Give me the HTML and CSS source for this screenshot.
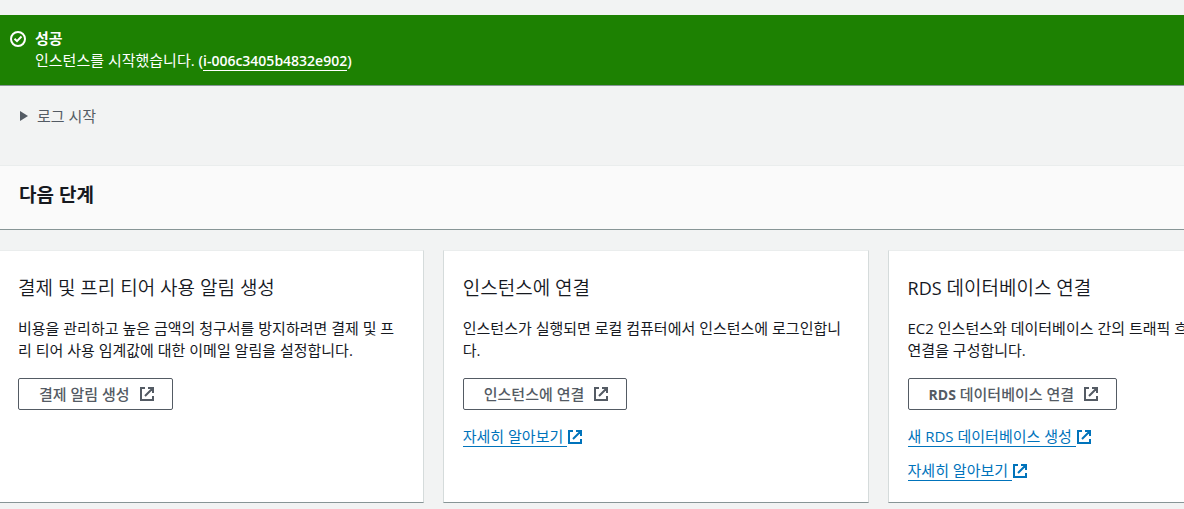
FILE: index.html
```html
<!DOCTYPE html>
<html lang="ko">
<head>
<meta charset="utf-8">
<meta name="viewport" content="width=device-width, initial-scale=1">
<title>인스턴스 시작</title>
<link rel="stylesheet" href="styles.css">
</head>
<body>
<svg class="symbols" aria-hidden="true">
  <symbol id="external" viewBox="0 0 14 14">
    <path d="M5 1H1v12h12V9M8 1h5v5M12.500 1.500L5 9" fill="none" stroke="currentColor" stroke-width="2"/>
  </symbol>
</svg>
<main class="page">
  <section class="flash" role="status">
    <svg class="flash-icon" viewBox="0 0 16 16" aria-hidden="true">
      <circle cx="8" cy="8" r="7" fill="none" stroke="currentColor" stroke-width="2"/>
      <path d="M4.500 7.800l2.500 2.400L11.500 5.500" fill="none" stroke="currentColor" stroke-width="2"/>
    </svg>
    <div>
      <div class="flash-title">성공</div>
      <div>인스턴스를 시작했습니다. <span class="flash-id">(<a class="flash-link" href="#instance">i-006c3405b4832e902</a>)</span></div>
    </div>
  </section>

  <button class="log-toggle" type="button" aria-expanded="false">
    <svg class="caret" viewBox="0 0 8 10" aria-hidden="true"><path d="M0 0l8 5-8 5z" fill="currentColor"/></svg>
    로그 시작
  </button>

  <header class="steps-header"><h2 class="steps-title">다음 단계</h2></header>

  <div class="cards">
    <article class="card">
      <h3 class="card-title">결제 및 프리 티어 사용 알림 생성</h3>
      <p class="card-text">비용을 관리하고 높은 금액의 청구서를 방지하려면 결제 및 프리 티어 사용 임계값에 대한 이메일 알림을 설정합니다.</p>
      <button class="button" type="button">결제 알림 생성<svg class="icon" aria-hidden="true"><use href="#external"/></svg></button>
    </article>
    <article class="card">
      <h3 class="card-title">인스턴스에 연결</h3>
      <p class="card-text">인스턴스가 실행되면 로컬 컴퓨터에서 인스턴스에 로그인합니다.</p>
      <button class="button" type="button">인스턴스에 연결<svg class="icon" aria-hidden="true"><use href="#external"/></svg></button>
      <a class="link" href="#connect"><span class="link-text">자세히 알아보기</span><svg class="icon" aria-hidden="true"><use href="#external"/></svg></a>
    </article>
    <article class="card">
      <h3 class="card-title"><span class="latin">RDS</span> 데이터베이스 연결</h3>
      <p class="card-text">EC2 인스턴스와 데이터베이스 간의 트래픽 흐름을 허용하도록 연결을 구성합니다.</p>
      <button class="button" type="button"><span><span class="latin-strong">RDS</span> 데이터베이스 연결</span><svg class="icon" aria-hidden="true"><use href="#external"/></svg></button>
      <a class="link" href="#create"><span class="link-text">새 RDS 데이터베이스 생성</span><svg class="icon" aria-hidden="true"><use href="#external"/></svg></a>
      <a class="link" href="#rds"><span class="link-text">자세히 알아보기</span><svg class="icon" aria-hidden="true"><use href="#external"/></svg></a>
    </article>
  </div>
</main>
</body>
</html>
```

FILE: styles.css
```css
* {
  box-sizing: border-box;
}

body {
  margin: 0;
  background: #f2f3f3;
  color: #16191f;
  font: 15px/22px "Open Sans", "Noto Sans CJK KR", sans-serif;
  overflow: hidden;
}

.symbols {
  position: absolute;
  width: 0;
  height: 0;
}

.page {
  padding: 15px 0 6px;
}

.flash {
  display: flex;
  gap: 9px;
  padding: 12px 10px 13px;
  background: #1d8102;
  color: #fff;
  border-bottom: 1px solid #879596;
}

.flash-icon {
  flex: none;
  width: 16px;
  height: 16px;
  margin-top: 4px;
}

.flash-title {
  font-weight: 700;
}

.flash-id {
  font-size: 14px;
  font-weight: 600;
}

.flash-link {
  color: inherit;
  text-decoration: none;
  border-bottom: 1px solid;
}

.log-toggle {
  display: flex;
  align-items: center;
  gap: 9px;
  margin: 19px 20px 38px;
  padding: 0;
  border: 0;
  background: none;
  color: #545b64;
  font: inherit;
}

.caret {
  width: 8px;
  height: 10px;
}

.steps-header {
  padding: 17px 19px 22px;
  background: #fafafa;
  border-top: 1px solid #eaeded;
  border-bottom: 1px solid #879596;
}

.steps-title,
.card-title {
  margin: 0;
  font-size: 19px;
  line-height: 24px;
}

.steps-title {
  font-weight: 700;
}

.card-title {
  font-weight: 350;
}

.latin {
  font-size: 18px;
  font-weight: 400;
  line-height: 1;
}

.latin-strong {
  font-size: 14px;
  font-weight: 700;
  line-height: 1;
}

.cards {
  display: grid;
  grid-template-columns: repeat(3, 35.9%);
  gap: 19px;
  margin: 20px 0 0 -2px;
}

.card {
  display: flex;
  flex-direction: column;
  align-items: flex-start;
  padding: 25px 19px 21px;
  background: #fff;
  border: 1px solid #d5dbdb;
  border-top-color: #eaeded;
  border-bottom-color: #879596;
}

.card-text {
  margin: 17px 0;
  word-break: break-all;
}

.button {
  display: flex;
  align-items: center;
  gap: 10px;
  height: 32px;
  margin-bottom: 3px;
  padding: 0 18px 0 20px;
  border: 1px solid #545b64;
  border-radius: 2px;
  background: #fff;
  color: #545b64;
  font: inherit;
  font-weight: 500;
}

.icon {
  flex: none;
  width: 14px;
  height: 14px;
}

.link {
  display: flex;
  align-items: center;
  gap: 1px;
  margin-top: 13px;
  color: #0073bb;
  line-height: 20px;
  text-decoration: none;
}

.link-text {
  padding-right: 4px;
  border-bottom: 1px solid;
}
```
